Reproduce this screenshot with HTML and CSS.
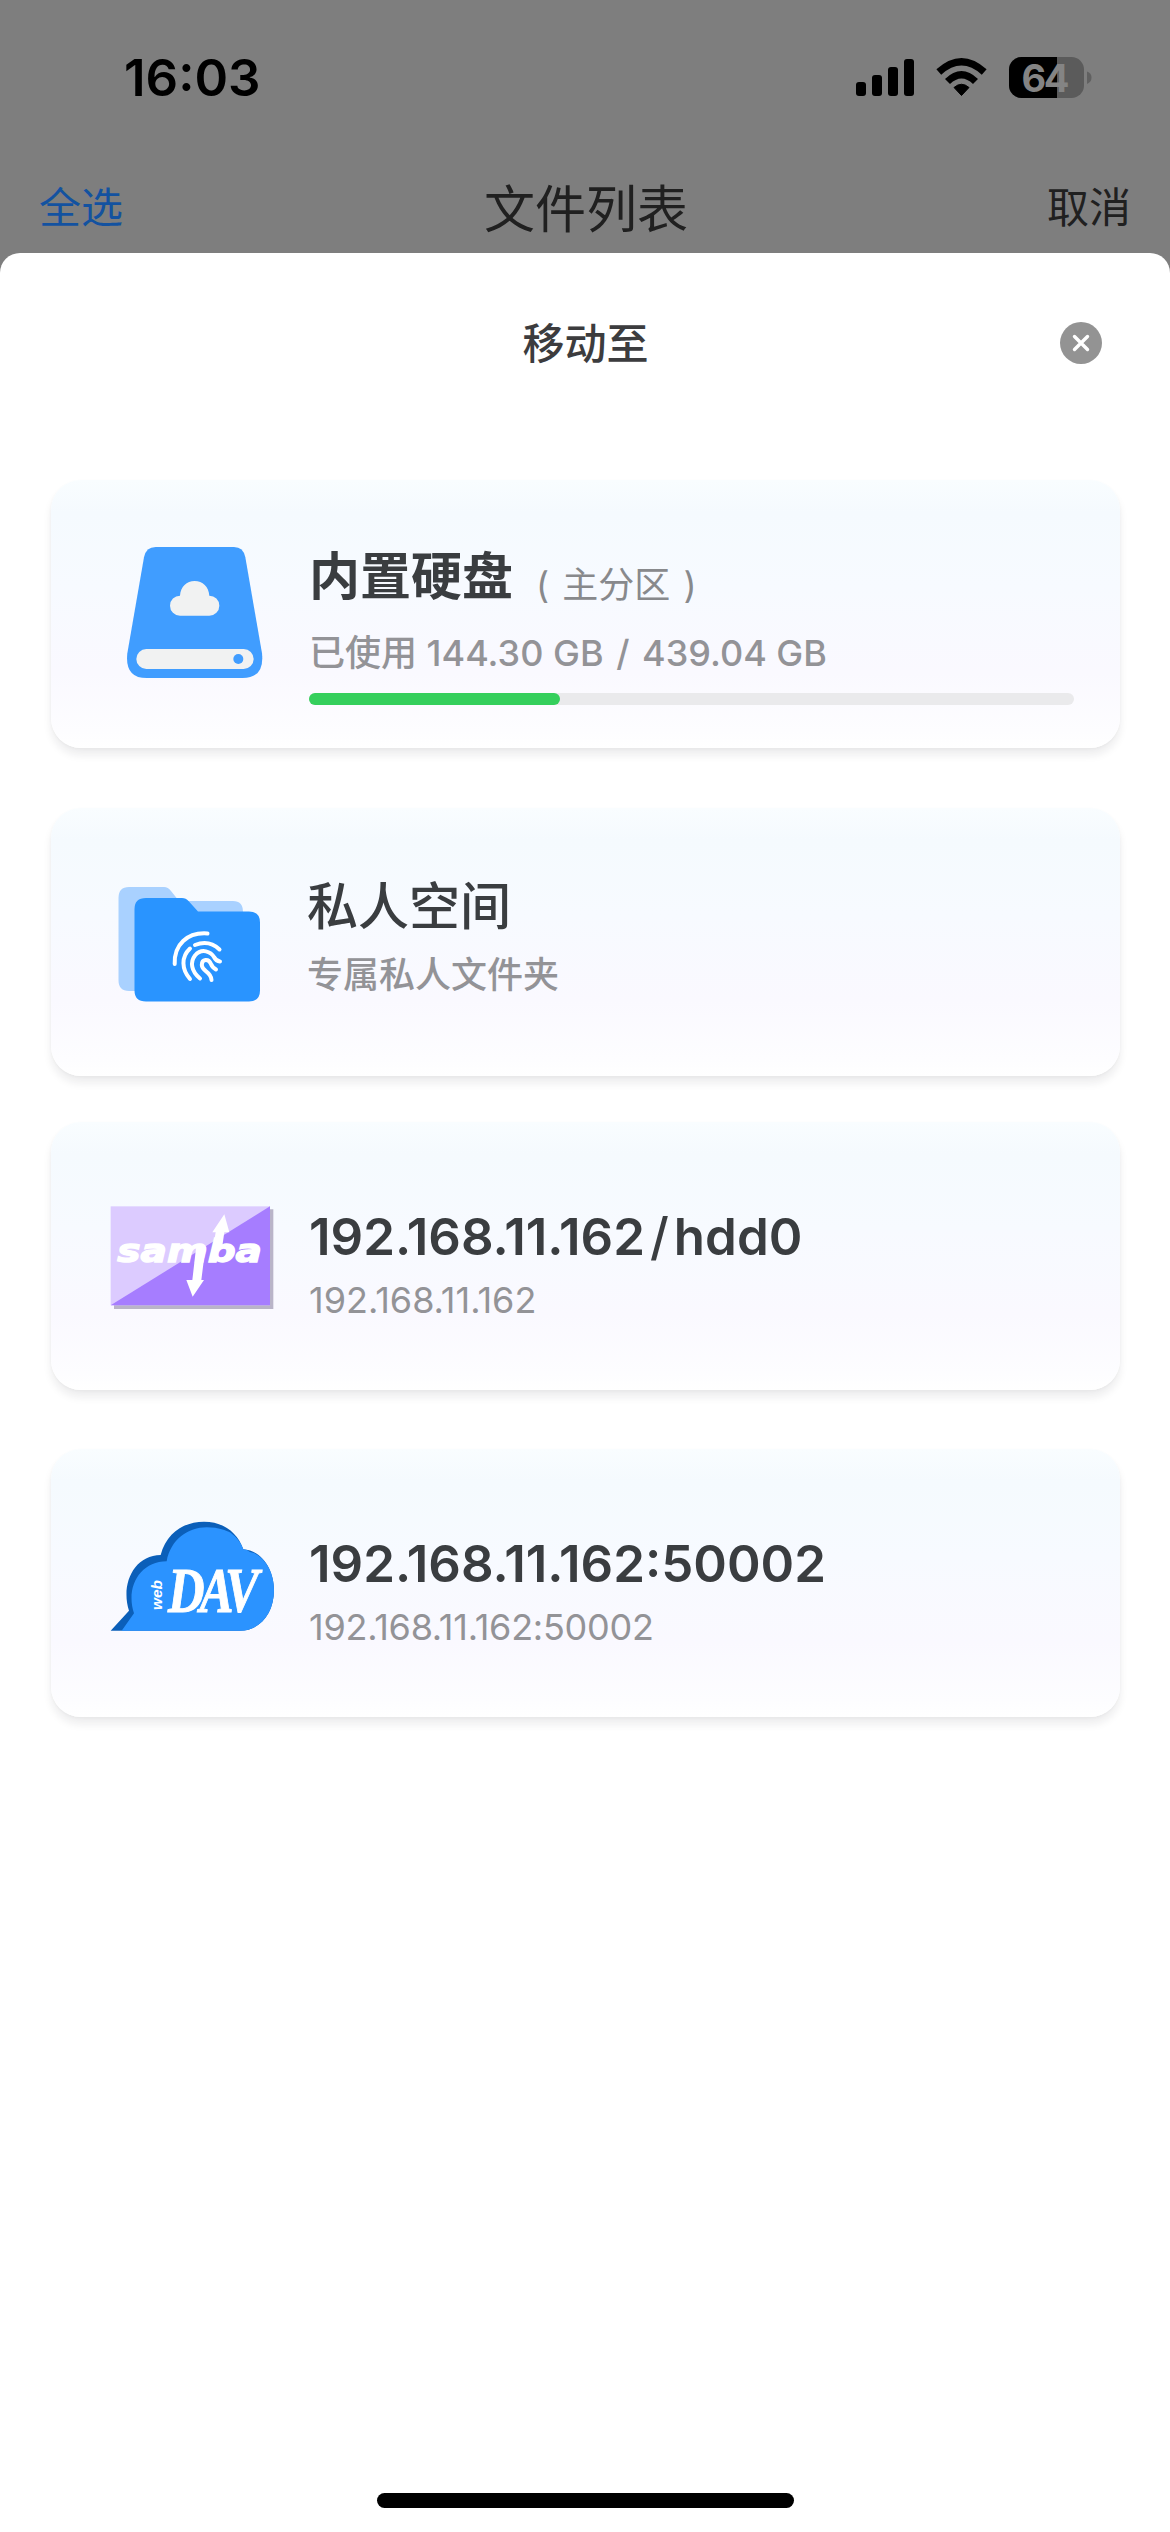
FILE: index.html
```html
<!DOCTYPE html>
<html lang="zh-CN">
<head>
<meta charset="utf-8">
<title>文件列表</title>
<link rel="stylesheet" href="styles.css">
</head>
<body>
<div class="screen">
  <header class="backdrop">
    <div class="status">
      <span class="time">16:03</span>
      <svg class="status-icons" viewBox="850 50 250 56" aria-hidden="true">
        <g fill="#000">
          <rect x="856" y="82" width="10" height="14" rx="3"/>
          <rect x="872" y="75" width="10" height="21" rx="3"/>
          <rect x="888" y="67" width="10" height="29" rx="3"/>
          <rect x="904" y="59" width="10" height="37" rx="3"/>
          <path d="M961.500 95.500L954 87.500Q961.500 81 969 87.500Z" stroke="#000" stroke-width="1" stroke-linejoin="round"/>
        </g>
        <path d="M947.500 81.500Q961.500 68 975.500 81.500M938.800 72Q961.500 51.500 984.200 72" fill="none" stroke="#000" stroke-width="7.200"/>
        <rect x="1009" y="57" width="75" height="41" rx="12.500" fill="#5b5b5b"/>
        <path d="M1021.500 57H1057V98H1021.500A12.500 12.500 0 0 1 1009 85.500V69.500A12.500 12.500 0 0 1 1021.500 57Z" fill="#000"/>
        <path d="M1087 71.500Q1091.500 73 1091.500 77.500T1087 84Z" fill="#606060"/>
        <text x="1021.500" y="91.500" class="battery-level" textLength="48">64</text>
      </svg>
    </div>
    <nav class="nav">
      <span class="nav-select">全选</span>
      <span class="nav-title">文件列表</span>
      <span class="nav-cancel">取消</span>
    </nav>
  </header>

  <main class="sheet">
    <div class="sheet-head">
      <h1 class="sheet-title">移动至</h1>
      <svg class="close" viewBox="0 0 42 42"><circle cx="21" cy="21" r="21" fill="#939393"/><path d="M14.500 14.500L27.500 27.500M27.500 14.500L14.500 27.500" stroke="#fff" stroke-width="3.400" stroke-linecap="round"/></svg>
    </div>

    <section class="card card-disk">
      <svg class="icon" viewBox="-6 12 504 480">
        <path d="M137 51H372Q400 51 406 82L456 370Q464 444 398 444H110Q44 444 52 370L102 82Q108 51 137 51Z" fill="#409dff"/>
        <path d="M210 257A30 30 0 0 1 210 197C212 170 230 153 254 153S296 170 298 197A30 30 0 0 1 298 257Z" fill="#f1f2f2"/>
        <rect x="79" y="357" width="352" height="60" rx="30" fill="#f1f2f2"/>
        <circle cx="385" cy="387" r="15" fill="#409dff"/>
      </svg>
      <div class="info">
        <div class="title disk-title"><span>内置硬盘</span><span class="note">( 主分区 )</span></div>
        <div class="sub usage">已使用 144.30 GB <span class="divider">/</span> 439.04 GB</div>
        <div class="track"><div class="fill"></div></div>
      </div>
    </section>

    <section class="card card-private">
      <svg class="icon" viewBox="108 862 168 160">
        <path d="M129 887H164Q168 887 171 891L179 901H233Q243 901 243 912V991H129Q118.500 991 118.500 980V898Q118.500 887 129 887Z" fill="#a9d1ff"/>
        <path d="M146 898H182Q186 898 188.500 901L198 911.500H249Q260 911.500 260 922.500V990.500Q260 1001.500 249 1001.500H146Q134.500 1001.500 134.500 990.500V909Q134.500 898 146 898Z" fill="#2994ff"/>
        <g fill="none" stroke="#fff" stroke-width="4" stroke-linecap="round" stroke-linejoin="round">
          <path d="M174.700 964C174 945 187 932 207.500 933.500"/>
          <path d="M195 945Q209 939.500 219.500 949.500"/>
          <path d="M190 948.500C181 957 181.500 969 190 979"/>
          <path d="M200 978.500C191 971 190 962 195 955.500C202 947.500 211 952 214 957Q216 961 220 961.500"/>
          <path d="M211.500 980C211 971 202 972 201.800 965C201.800 959 208.500 958 211 964Q212 967 216 969.500"/>
        </g>
      </svg>
      <div class="info">
        <div class="title">私人空间</div>
        <div class="sub">专属私人文件夹</div>
      </div>
    </section>

    <section class="card card-samba">
      <svg class="icon" viewBox="54 -12 504 480">
        <path d="M72 88H550V387H72Z" fill="#b9b4c8"/>
        <rect x="62" y="79" width="478" height="297" fill="#dccbff"/>
        <path d="M540 79V376H62Z" fill="#a67dff"/>
        <text class="samba-word" x="82" y="247" textLength="434" lengthAdjust="spacingAndGlyphs">samba</text>
        <path d="M403 103L418 157H403L396 205H369L377 157H367ZM318 205H346L334 300H342L308 350L289 300H307Z" fill="#fff"/>
      </svg>
      <div class="info">
        <div class="title host">192.168.11.162<span class="slash">/</span>hdd0</div>
        <div class="sub address">192.168.11.162</div>
      </div>
    </section>

    <section class="card card-dav">
      <svg class="icon" viewBox="54 9 504 480">
        <path d="M62 392L117 332C92 255 130 166 212 165C230 96 285 65 342 65C400 65 443 98 460 148C518 152 552 212 552 270C552 340 510 392 450 392Z" fill="#0b5fb9"/>
        <path d="M95 392L132 340C106 262 150 184 230 184C242 118 295 82 350 82C388 82 408 92 422 98C442 113 453 128 460 148Q472 149 480 156L492 159C532 178 552 224 552 270C552 340 510 392 450 392Z" fill="#2b93ff"/>
        <text class="dav-word" transform="translate(234 336) scale(.8 1)">DAV</text>
        <text class="web-word" transform="translate(216 330) rotate(-90)" textLength="90" lengthAdjust="spacingAndGlyphs">web</text>
      </svg>
      <div class="info">
        <div class="title host">192.168.11.162:50002</div>
        <div class="sub address port">192.168.11.162:50002</div>
      </div>
    </section>

    <div class="home-indicator"></div>
  </main>
</div>
</body>
</html>
```
FILE: styles.css
```css
* { box-sizing: border-box; }
body { margin: 0; font-family: Inter, "Noto Sans CJK SC", sans-serif; }
.screen { width: 1170px; height: 2532px; display: flex; flex-direction: column; background: #7e7e7e; overflow: hidden; }
.backdrop { height: 253px; flex: none; }
.status { height: 156px; padding: 50px 70px 0 124px; display: flex; align-items: flex-start; justify-content: space-between; }
.time { font-size: 51px; font-weight: 600; line-height: 56px; color: #000; }
.status-icons { width: 250px; height: 56px; }
.battery-level { font-size: 38px; font-weight: 700; fill: #848484; }
.nav { height: 104px; padding: 0 39px 7px; display: grid; grid-template-columns: 1fr auto 1fr; align-items: center; font-size: 42px; color: #202020; }
.nav-select { color: #1352a0; }
.nav-title { padding: 3px 0 0 2px; font-size: 51px; }
.nav-cancel { text-align: right; }
.sheet { flex: 1; display: flex; flex-direction: column; background: #fff; border-radius: 20px 20px 0 0; padding: 0 50px 24px 51px; }
.sheet-head { height: 180px; margin-bottom: 47px; padding-right: 18px; display: grid; grid-template-columns: 1fr auto 1fr; align-items: center; }
.sheet-title { grid-column: 2; margin: 0; padding: 0 0 6px 18px; font-size: 42px; font-weight: 500; color: #3c3c3e; }
.close { width: 42px; height: 42px; justify-self: end; }
.card { flex: none; height: 268px; padding: 0 46px 0 57px; display: flex; gap: 33px; border-radius: 30px; background: linear-gradient(#f9fdff 0%, #f5fafe 12%, #f7faff 40%, #faf9ff 72%, #fdfdff 94%, #fff 100%); box-shadow: 0 7px 9px rgba(30, 30, 40, .08), 0 1px 3px rgba(30, 30, 40, .035); }
.icon { flex: none; width: 168px; height: 160px; align-self: center; overflow: visible; }
.info { flex: 1; padding-top: 85px; white-space: nowrap; }
.title { font-size: 51px; font-weight: 500; line-height: 60px; color: #3a3d40; }
.disk-title { height: 60px; display: flex; align-items: baseline; gap: 23px; font-weight: 700; }
.note { position: relative; top: 3px; font-size: 36px; font-weight: 400; word-spacing: 3px; color: #88898c; }
.sub { margin-top: 9px; font-size: 36px; line-height: 48px; color: #939397; }
.host { font-weight: 600; }
.slash { padding: 0 5px; font-weight: 500; }
.card-disk .info { padding-top: 67px; }
.usage { margin-top: 22px; font-weight: 500; }
.divider { padding: 0 3px; }
.track { height: 12px; margin-top: 16px; border-radius: 6px; background: #eaeaec; }
.fill { width: 251px; height: 12px; border-radius: 6px; background: #35cf5c; }
.card-private { margin-top: 60px; }
.card-private .info { padding-top: 69px; margin-left: -2px; }
.card-private .sub { margin-top: 14px; font-weight: 500; }
.card-samba { margin-top: 46px; }
.card-dav { margin-top: 59px; }
.port { letter-spacing: -0.25px; }
.samba-word { font: italic 700 95px "DejaVu Sans", sans-serif; fill: #fff; stroke: #fff; stroke-width: 4px; }
.dav-word { font: italic 700 190px "Liberation Serif", serif; letter-spacing: -18px; fill: #fff; stroke: #fff; stroke-width: 3px; }
.web-word { font: italic 700 44px "Liberation Sans", sans-serif; fill: #fff; }
.home-indicator { width: 417px; height: 15px; margin: auto auto 0; border-radius: 8px; background: #000; }
```
